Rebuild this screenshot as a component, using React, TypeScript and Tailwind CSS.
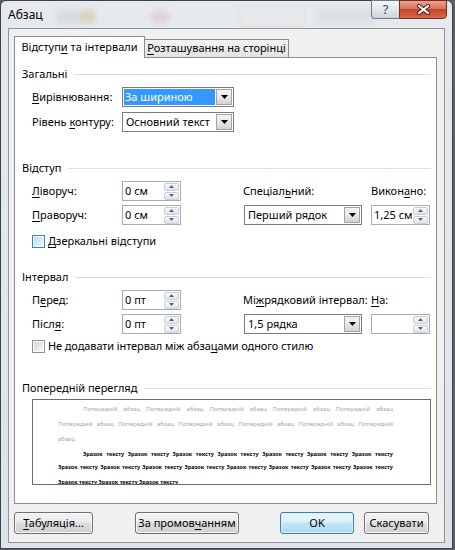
import React from 'react';

const U: React.FC<{ children: React.ReactNode }> = ({ children }) => (
  <span className="underline decoration-1 underline-offset-[2px]">{children}</span>
);

const Arrow: React.FC<{ up?: boolean }> = ({ up }) => (
  <svg width="5" height="3" viewBox="0 0 5 3">
    <path d={up ? 'M0 3 L2.5 0 L5 3 Z' : 'M0 0 L2.5 3 L5 0 Z'} fill="#4f6282" />
  </svg>
);

const Spin: React.FC<{ value?: string }> = ({ value }) => (
  <div className="flex h-[20px] w-[59px] items-center border border-[#a9acb2] bg-white">
    <span className="flex-1 pl-[2px]">{value}</span>
    <div className="mr-[1px] flex w-[15px] flex-col gap-[1px]">
      <div className="flex h-[8px] items-center justify-center rounded-[2px] border border-[#c8ced6] bg-[linear-gradient(#f7f9fb,#dfe5ec)]">
        <Arrow up />
      </div>
      <div className="flex h-[8px] items-center justify-center rounded-[2px] border border-[#c8ced6] bg-[linear-gradient(#f7f9fb,#dfe5ec)]">
        <Arrow />
      </div>
    </div>
  </div>
);

const Dropdown: React.FC<{ width: string; selected?: boolean; children: React.ReactNode }> = ({
  width,
  selected,
  children,
}) => (
  <div className={`flex h-[20px] items-center gap-[1px] border border-[#7c7c7c] bg-white p-[1px] ${width}`}>
    {selected ? (
      <span className="flex h-full flex-1 items-center bg-[#3399ff] pl-[1px] text-white">{children}</span>
    ) : (
      <span className="flex h-full flex-1 items-center pl-[2px]">{children}</span>
    )}
    <div className="flex h-full w-[16px] items-center justify-center border border-[#a3a3a3] bg-[linear-gradient(#f4f4f4,#e8e8e8_50%,#d2d2d2)]">
      <svg width="7" height="4" viewBox="0 0 7 4">
        <path d="M0 0 H7 L3.5 4 Z" fill="#000" />
      </svg>
    </div>
  </div>
);

const Header: React.FC<{ title: string; className?: string }> = ({ title, className }) => (
  <div className={`flex h-[14px] items-center gap-[7px] ${className ?? ''}`}>
    <span>{title}</span>
    <div className="h-px flex-1 bg-[#d5dfe5]" />
  </div>
);

const Check: React.FC<{ focused?: boolean }> = ({ focused }) =>
  focused ? (
    <div className="flex h-[13px] w-[13px] items-center justify-center border border-[#3c7fb1] bg-white">
      <div className="h-[9px] w-[9px] bg-[linear-gradient(135deg,#b9def6,#e9f6fd)]" />
    </div>
  ) : (
    <div className="flex h-[13px] w-[13px] items-center justify-center border border-[#8e8f8f] bg-white">
      <div className="h-[9px] w-[9px] bg-[linear-gradient(135deg,#d3d3d3,#f8f8f8)]" />
    </div>
  );

const Btn: React.FC<{ className: string; primary?: boolean; children: React.ReactNode }> = ({
  className,
  primary,
  children,
}) => (
  <button
    className={
      primary
        ? `flex h-[22px] items-center justify-center rounded-[3px] border border-[#3c7fb1] bg-[linear-gradient(#ecf7fd,#dcf1fc_45%,#c2e5f8_50%,#abd8f1)] shadow-[inset_0_0_0_1px_#def1fb] ${className}`
        : `flex h-[22px] items-center justify-center rounded-[3px] border border-[#707070] bg-[linear-gradient(#f2f2f2,#ebebeb_45%,#dddddd_50%,#cfcfcf)] shadow-[inset_0_0_0_1px_#fafafa] ${className}`
    }
  >
    {children}
  </button>
);

const GRAY = 'Попередній абзац';
const SAMPLE = 'Зразок тексту';

export default function App() {
  return (
    <div className="h-[550px] w-[455px] overflow-hidden bg-[#5d6167] font-['Noto_Sans',sans-serif] text-[11px] text-black">
      <div className="flex h-[549px] w-[453px] flex-col rounded-t-[6px] border border-[#3f4347] bg-[linear-gradient(#e6eaee,#dde3e9)]">
        {/* Title bar */}
        <div className="relative flex h-[27px] items-start">
          <div className="absolute left-[55px] top-[9px] h-[14px] w-[40px] rounded bg-[#9aa2ab] opacity-20 blur-[3px]" />
          <div className="absolute left-[80px] top-[9px] h-[12px] w-[14px] bg-[#e6c25a] opacity-25 blur-[2px]" />
          <div className="absolute left-[150px] top-[10px] h-[12px] w-[18px] rounded bg-[#d9639c] opacity-20 blur-[3px]" />
          <div className="absolute left-[238px] top-[4px] h-[22px] w-[66px] border border-[#e8cf84] opacity-40 blur-[1px]" />
          <div className="absolute left-[315px] top-[6px] h-[18px] w-[60px] bg-[#c7ccd2] opacity-25 blur-[2px]" />
          <span className="relative ml-[7px] mt-[5px] text-[12px]">Абзац</span>
          <div className="relative ml-auto mr-[5px] -mt-px flex h-[19px]">
            <div className="flex w-[28px] items-center justify-center rounded-bl-[4px] border border-r-0 border-[#6f7886] bg-[linear-gradient(#f4f6f9,#e3e8ee_50%,#cdd4dc)] text-[13px] leading-none text-[#3d4653]">
              ?
            </div>
            <div className="flex w-[48px] items-center justify-center rounded-br-[4px] border border-[#7a2a1b] bg-[linear-gradient(#eaa593,#d7715a_45%,#c4432a_50%,#d5684c)]">
              <svg width="15" height="11" viewBox="0 0 15 11">
                <path d="M3 2 L12 9 M12 2 L3 9" stroke="#4a1a10" strokeWidth="4" strokeLinecap="round" />
                <path d="M3 2 L12 9 M12 2 L3 9" stroke="#fff" strokeWidth="2.2" strokeLinecap="round" />
              </svg>
            </div>
          </div>
        </div>

        {/* Client area */}
        <div className="mx-[7px] flex h-[515px] flex-col border border-[#8e949b] bg-[#f0f0f0] pl-[5px] pt-[7px]">
          {/* Tabs */}
          <div className="flex h-[21px] items-end">
            <div className="relative z-10 -mb-px flex h-[22px] w-[131px] items-center justify-center border border-b-0 border-[#898c95] bg-white">
              <span>
                Відступ<U>и</U> та інтервали
              </span>
            </div>
            <div className="flex h-[18px] w-[144px] items-center justify-center border border-l-0 border-b-0 border-[#898c95] bg-[linear-gradient(#f3f3f3,#e2e2e2)]">
              <span>
                <U>Р</U>озташування на сторінці
              </span>
            </div>
          </div>

          {/* Panel */}
          <div className="flex h-[447px] w-[423px] flex-col border border-[#898c95] bg-white pl-[7px] pr-[5px]">
            <Header title="Загальні" className="mt-[9px]" />
            <div className="ml-[10px] mt-[6px] flex h-[20px] items-center">
              <div className="w-[90px]">
                <U>В</U>ирівнювання:
              </div>
              <Dropdown width="w-[112px]" selected>
                За шириною
              </Dropdown>
            </div>
            <div className="ml-[10px] mt-[5px] flex h-[20px] items-center">
              <div className="w-[90px]">
                Рівень <U>к</U>онтуру:
              </div>
              <Dropdown width="w-[112px]">Основний текст</Dropdown>
            </div>

            <Header title="Відступ" className="mt-[29px]" />
            <div className="ml-[10px] mt-[6px] flex h-[20px] items-center">
              <div className="w-[90px]">
                <U>Л</U>іворуч:
              </div>
              <Spin value="0 см" />
              <div className="w-[62px]" />
              <div className="w-[128px]">
                Спеціал<U>ь</U>ний:
              </div>
              <div>
                Викон<U>а</U>но:
              </div>
            </div>
            <div className="ml-[10px] mt-[4px] flex h-[20px] items-center">
              <div className="w-[90px]">
                <U>П</U>раворуч:
              </div>
              <Spin value="0 см" />
              <div className="w-[63px]" />
              <Dropdown width="w-[118px]">Перший рядок</Dropdown>
              <div className="w-[9px]" />
              <Spin value="1,25 см" />
            </div>
            <div className="ml-[10px] mt-[9px] flex h-[14px] items-center gap-[3px]">
              <Check focused />
              <span>
                <U>Д</U>зеркальні відступи
              </span>
            </div>

            <Header title="Інтервал" className="mt-[22px]" />
            <div className="ml-[10px] mt-[6px] flex h-[20px] items-center">
              <div className="w-[90px]">
                П<U>е</U>ред:
              </div>
              <Spin value="0 пт" />
              <div className="w-[62px]" />
              <div className="w-[128px]">
                Мі<U>ж</U>рядковий інтервал:
              </div>
              <div>
                <U>Н</U>а:
              </div>
            </div>
            <div className="ml-[10px] mt-[4px] flex h-[20px] items-center">
              <div className="w-[90px]">
                Післ<U>я</U>:
              </div>
              <Spin value="0 пт" />
              <div className="w-[63px]" />
              <Dropdown width="w-[118px]">1,5 рядка</Dropdown>
              <div className="w-[9px]" />
              <Spin />
            </div>
            <div className="ml-[10px] mt-[5px] flex h-[14px] items-center gap-[3px] tracking-[-0.1px]">
              <Check />
              <span>
                Не додавати інтервал між абза<U>ц</U>ами одного стилю
              </span>
            </div>

            <Header title="Попередній перегляд" className="mt-[28px]" />
            <div className="ml-[10px] mt-[4px] h-[86px] w-[399px] overflow-hidden border border-[#6b6b6b] bg-white pt-[2px]">
              <div className="h-[15px] overflow-hidden pl-[50px] pr-[37px] text-justify text-[6px] leading-[15px] text-[#a8a8a8] [text-align-last:justify]">
                {Array(5).fill(GRAY).join(' ')}
              </div>
              <div className="h-[15px] overflow-hidden pl-[25px] pr-[37px] text-justify text-[6px] leading-[15px] text-[#a8a8a8] [text-align-last:justify]">
                {Array(5).fill(GRAY).join(' ')} Попередній
              </div>
              <div className="h-[15px] pl-[25px] text-[6px] leading-[15px] text-[#a8a8a8]">абзац</div>
              <div className="h-[14px] overflow-hidden pl-[50px] pr-[37px] text-justify text-[5.5px] font-bold leading-[14px] [text-align-last:justify]">
                {Array(7).fill(SAMPLE).join(' ')}
              </div>
              <div className="h-[12px] overflow-hidden pl-[25px] pr-[37px] text-justify text-[5.5px] font-bold leading-[12px] [text-align-last:justify]">
                {Array(8).fill(SAMPLE).join(' ')}
              </div>
              <div className="h-[18px] pl-[25px] text-[5.5px] font-bold leading-[18px]">
                {Array(3).fill(SAMPLE).join(' ')}
              </div>
            </div>
          </div>

          {/* Buttons */}
          <div className="mt-[8px] flex">
            <Btn className="w-[79px]">
              <span>
                <U>Т</U>абуляція...
              </span>
            </Btn>
            <Btn className="ml-[42px] w-[104px]">
              <span>
                За промов<U>ч</U>анням
              </span>
            </Btn>
            <Btn className="ml-[41px] w-[74px]" primary>
              OK
            </Btn>
            <Btn className="ml-[10px] w-[65px]">Скасувати</Btn>
          </div>
        </div>
      </div>
    </div>
  );
}
